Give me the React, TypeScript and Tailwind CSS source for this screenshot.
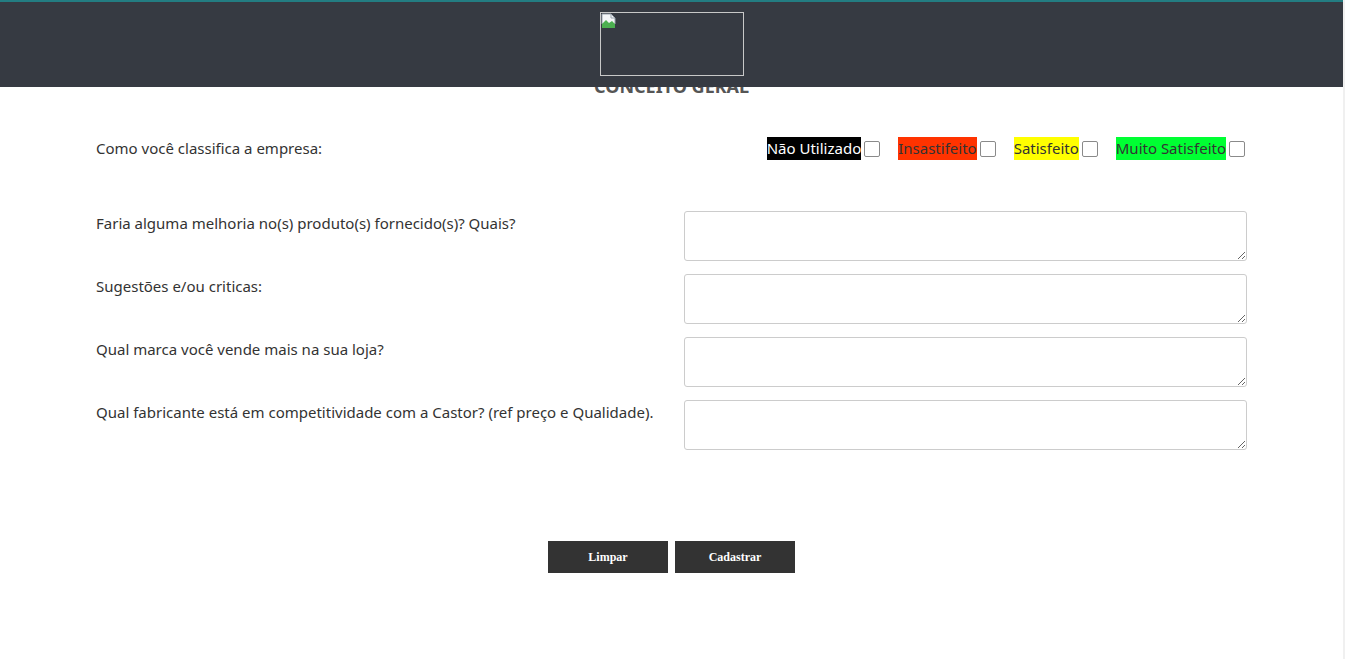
import { useState } from 'react';

const ratings = [
  { label: 'Não Utilizado', color: 'bg-black text-white' },
  { label: 'Insastifeito', color: 'bg-[#ff3300] text-[#333]' },
  { label: 'Satisfeito', color: 'bg-[#ffff00] text-[#333]' },
  { label: 'Muito Satisfeito', color: 'bg-[#00ff33] text-[#333]' },
];

const questions = [
  'Faria alguma melhoria no(s) produto(s) fornecido(s)? Quais?',
  'Sugestões e/ou criticas:',
  'Qual marca você vende mais na sua loja?',
  'Qual fabricante está em competitividade com a Castor? (ref preço e Qualidade).',
];

function BrokenImage() {
  return (
    <svg width="16" height="16" viewBox="0 0 16 16" className="absolute left-0 top-0">
      <path d="M1 1h9l4 4v6H1z" fill="#f4f6f8" stroke="#9aa3ad" strokeWidth="1" />
      <path d="M1 11l4-4 3 3 3-2 3 3v4H1z" fill="#4caf50" />
      <path d="M10 1v4h4" fill="none" stroke="#9aa3ad" />
    </svg>
  );
}

export default function App() {
  const [checked, setChecked] = useState<Record<string, boolean>>({});

  return (
    <div className="flex min-h-screen bg-white font-['Noto_Sans',sans-serif] text-[#333]">
      <div className="relative flex-1">
        {/* Header */}
        <header className="fixed left-0 right-[2px] top-0 z-10 h-[87px] border-t-2 border-[#237d82] bg-[#363a42]">
          <div className="flex justify-center pt-[10px]">
            <div className="relative h-[64px] w-[144px] border border-[#c8c8c8]">
              <BrokenImage />
            </div>
          </div>
        </header>

        <main className="pt-[74px]">
          <h2 className="text-center text-[18px] font-bold uppercase leading-[24px] text-[#555]">Conceito Geral</h2>

          <div className="mx-auto w-[1151px]">
            {/* Rating row */}
            <div className="mt-[39px] flex items-center justify-between">
              <span className="text-[15px]">Como você classifica a empresa:</span>
              <div className="flex items-center gap-[18px] pr-[2px]">
                {ratings.map((r) => (
                  <label key={r.label} className="flex items-center gap-[3px]">
                    <span className={`${r.color} text-[15px] leading-[23px]`}>{r.label}</span>
                    <input
                      type="checkbox"
                      checked={!!checked[r.label]}
                      onChange={() => setChecked({ ...checked, [r.label]: !checked[r.label] })}
                      className="h-[16px] w-[16px] appearance-none rounded-[2px] border border-[#8a8a8a] bg-white"
                    />
                  </label>
                ))}
              </div>
            </div>

            {/* Questions */}
            <div className="mt-[51px] flex flex-col gap-[13px]">
              {questions.map((q) => (
                <div key={q} className="flex">
                  <label className="w-[588px] pt-[2px] text-[15px] leading-[20px]">{q}</label>
                  <textarea className="h-[50px] flex-1 rounded-[3px] border border-[#ccc] bg-white" />
                </div>
              ))}
            </div>

            {/* Buttons */}
            <div className="mt-[91px] flex justify-center gap-[7px]">
              <button className="h-[32px] w-[120px] bg-[#333] font-['Liberation_Serif',serif] text-[12px] font-bold text-white">
                Limpar
              </button>
              <button className="h-[32px] w-[120px] bg-[#333] font-['Liberation_Serif',serif] text-[12px] font-bold text-white">
                Cadastrar
              </button>
            </div>
          </div>
        </main>
      </div>
      <div className="w-[2px] bg-[#f0f0f0]" />
    </div>
  );
}
